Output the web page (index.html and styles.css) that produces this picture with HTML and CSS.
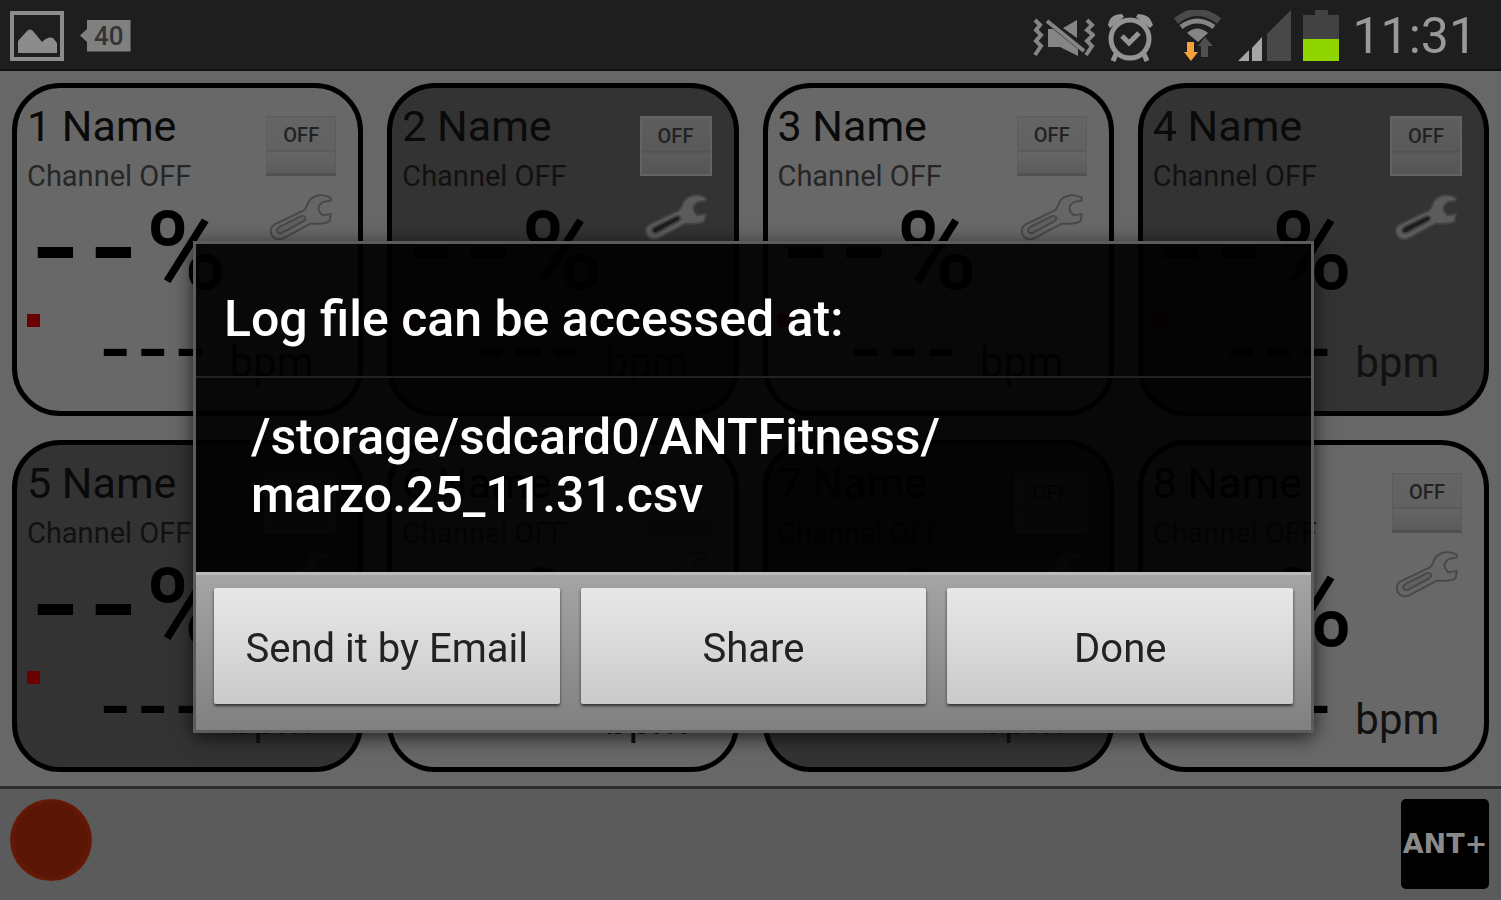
FILE: index.html
```html
<!DOCTYPE html>
<html lang="en">
<head>
  <meta charset="UTF-8" />
  <meta name="viewport" content="width=device-width, initial-scale=1.0"/>
  <title>ANT+ Fitness</title>
  <link rel="stylesheet" href="styles.css">
</head>
<body>

  <svg class="symbols" aria-hidden="true">
    <symbol id="wrench" viewBox="0 0 66 50">
      <path class="wrench-body" d="M5 32 L36 17 C39 15 39 12 41 8 C45 1 56 -1 64 4 L64 7 L57 8 C52 10 50 14 52 18 L55 22 L64 21 L63 28 C58 32 49 31 43 31 L15 46 C9 49 3 46 2 41 C1 37 2 34 5 32 Z"/>
      <path class="wrench-slot" d="M11 34 L33 23 C37 22 39 25 36 28 L14 40 C8 43 6 37 11 34 Z"/>
    </symbol>
  </svg>

  <header class="status-bar">
    <div class="status-left">
      <svg width="54" height="50" viewBox="0 0 54 50">
        <rect x="2" y="2" width="50" height="46" fill="none" stroke="#8c8c8c" stroke-width="4"/>
        <path d="M8 42 V30 L17 20 Q20 17 23 20 L32 31 Q38 25 43 27 L47 32 V42 Z" fill="#8c8c8c"/>
      </svg>
      <span class="tag">40</span>
    </div>
    <div class="status-right">
      <svg width="62" height="52" viewBox="0 0 62 52">
        <path d="M2 10 L7 15 L3 20 L8 25 L3 31 L8 36 L2 45 M54 10 L59 15 L54 20 L60 25 L54 31 L59 36 L53 45" fill="none" stroke="#858585" stroke-width="4"/>
        <path d="M15 19 H20 L45 39 V46 L27 37 H15 Z M30 18 L44 10 V28 Z" fill="#858585"/>
        <path d="M14 11 L51 41" stroke="#858585" stroke-width="4"/>
      </svg>
      <svg width="51" height="52" viewBox="0 0 51 52">
        <circle cx="23" cy="29" r="19" fill="none" stroke="#949494" stroke-width="5"/>
        <path d="M15 26 L22 33 L32 23" fill="none" stroke="#949494" stroke-width="5"/>
        <path d="M1 15 Q3 4 15 4 L17 7 L3 18 Z M46 15 Q43 4 31 4 L29 7 L43 18 Z" fill="#949494"/>
        <path d="M9 44 L6 51 M37 44 L40 51" stroke="#949494" stroke-width="5"/>
      </svg>
      <svg width="56" height="52" viewBox="0 0 56 52">
        <path d="M6 11 Q27 -6 49 11" fill="none" stroke="#4a4a4a" stroke-width="7"/>
        <path d="M11 17 Q27 5 44 17" fill="none" stroke="#858585" stroke-width="5"/>
        <path d="M17 23 Q27 14 38 23 L28 32 Z" fill="#858585"/>
        <path d="M35 27 L43 36 H38 V47 H31 V36 H28 Z" fill="#4f4f4f"/>
        <path d="M17 32 H24 V42 H28 L21 51 L14 42 H17 Z" fill="#f5a03a"/>
      </svg>
      <svg width="53" height="52" viewBox="0 0 53 52">
        <path d="M29 24 L53 0 V51 H29 Z" fill="#484848"/>
        <path d="M14 38 L24 27 V51 H14 Z M0 51 L11 40 V51 Z" fill="#a5a5a5"/>
      </svg>
      <svg width="37" height="52" viewBox="0 0 37 52">
        <path d="M0 5 H12 V0 H25 V5 H36 V29 H0 Z" fill="#424242"/>
        <path d="M0 29 H36 V51 H0 Z" fill="#90d500"/>
      </svg>
      <time class="clock">11:31</time>
    </div>
  </header>

  <main class="channels">
    <article class="card">
      <div class="card-top">
        <div class="info">
          <h2>1 Name</h2>
          <p class="channel">Channel OFF</p>
          <div class="percent"><span>-</span><span>-</span><b>%</b></div>
        </div>
        <div class="controls">
          <button class="toggle" type="button">OFF</button>
          <button class="settings" type="button" aria-label="Settings"><svg><use href="#wrench"/></svg></button>
        </div>
      </div>
      <div class="rate"><i class="dot"></i><span>-</span><span>-</span><span>-</span><b>bpm</b></div>
    </article>

    <article class="card dark">
      <div class="card-top">
        <div class="info">
          <h2>2 Name</h2>
          <p class="channel">Channel OFF</p>
          <div class="percent"><span>-</span><span>-</span><b>%</b></div>
        </div>
        <div class="controls">
          <button class="toggle" type="button">OFF</button>
          <button class="settings" type="button" aria-label="Settings"><svg><use href="#wrench"/></svg></button>
        </div>
      </div>
      <div class="rate"><i class="dot"></i><span>-</span><span>-</span><span>-</span><b>bpm</b></div>
    </article>

    <article class="card">
      <div class="card-top">
        <div class="info">
          <h2>3 Name</h2>
          <p class="channel">Channel OFF</p>
          <div class="percent"><span>-</span><span>-</span><b>%</b></div>
        </div>
        <div class="controls">
          <button class="toggle" type="button">OFF</button>
          <button class="settings" type="button" aria-label="Settings"><svg><use href="#wrench"/></svg></button>
        </div>
      </div>
      <div class="rate"><i class="dot"></i><span>-</span><span>-</span><span>-</span><b>bpm</b></div>
    </article>

    <article class="card dark">
      <div class="card-top">
        <div class="info">
          <h2>4 Name</h2>
          <p class="channel">Channel OFF</p>
          <div class="percent"><span>-</span><span>-</span><b>%</b></div>
        </div>
        <div class="controls">
          <button class="toggle" type="button">OFF</button>
          <button class="settings" type="button" aria-label="Settings"><svg><use href="#wrench"/></svg></button>
        </div>
      </div>
      <div class="rate"><i class="dot"></i><span>-</span><span>-</span><span>-</span><b>bpm</b></div>
    </article>

    <article class="card dark">
      <div class="card-top">
        <div class="info">
          <h2>5 Name</h2>
          <p class="channel">Channel OFF</p>
          <div class="percent"><span>-</span><span>-</span><b>%</b></div>
        </div>
        <div class="controls">
          <button class="toggle" type="button">OFF</button>
          <button class="settings" type="button" aria-label="Settings"><svg><use href="#wrench"/></svg></button>
        </div>
      </div>
      <div class="rate"><i class="dot"></i><span>-</span><span>-</span><span>-</span><b>bpm</b></div>
    </article>

    <article class="card">
      <div class="card-top">
        <div class="info">
          <h2>6 Name</h2>
          <p class="channel">Channel OFF</p>
          <div class="percent"><span>-</span><span>-</span><b>%</b></div>
        </div>
        <div class="controls">
          <button class="toggle" type="button">OFF</button>
          <button class="settings" type="button" aria-label="Settings"><svg><use href="#wrench"/></svg></button>
        </div>
      </div>
      <div class="rate"><i class="dot"></i><span>-</span><span>-</span><span>-</span><b>bpm</b></div>
    </article>

    <article class="card dark">
      <div class="card-top">
        <div class="info">
          <h2>7 Name</h2>
          <p class="channel">Channel OFF</p>
          <div class="percent"><span>-</span><span>-</span><b>%</b></div>
        </div>
        <div class="controls">
          <button class="toggle" type="button">OFF</button>
          <button class="settings" type="button" aria-label="Settings"><svg><use href="#wrench"/></svg></button>
        </div>
      </div>
      <div class="rate"><i class="dot"></i><span>-</span><span>-</span><span>-</span><b>bpm</b></div>
    </article>

    <article class="card">
      <div class="card-top">
        <div class="info">
          <h2>8 Name</h2>
          <p class="channel">Channel OFF</p>
          <div class="percent"><span>-</span><span>-</span><b>%</b></div>
        </div>
        <div class="controls">
          <button class="toggle" type="button">OFF</button>
          <button class="settings" type="button" aria-label="Settings"><svg><use href="#wrench"/></svg></button>
        </div>
      </div>
      <div class="rate"><i class="dot"></i><span>-</span><span>-</span><span>-</span><b>bpm</b></div>
    </article>
  </main>

  <footer class="toolbar">
    <button class="record" type="button" aria-label="Record"></button>
    <div class="ant-logo">ANT+</div>
  </footer>

  <div class="overlay">
    <section class="dialog" role="dialog" aria-labelledby="dialogTitle">
      <h1 id="dialogTitle">Log file can be accessed at:</h1>
      <p class="path">/storage/sdcard0/ANTFitness/<br>marzo.25_11.31.csv</p>
      <div class="actions">
        <button type="button">Send it by Email</button>
        <button type="button">Share</button>
        <button type="button">Done</button>
      </div>
    </section>
  </div>

</body>
</html>
```
FILE: styles.css
```css
* {
  box-sizing: border-box;
  margin: 0;
  padding: 0;
}

body {
  font-family: Roboto, sans-serif;
  background: #676767;
  color: #0a0a0a;
  min-height: 100vh;
  display: flex;
  flex-direction: column;
}

button {
  font-family: inherit;
  border: none;
  cursor: pointer;
}

.symbols {
  position: absolute;
  width: 0;
  height: 0;
}

/* status bar */

.status-bar {
  height: 71px;
  padding: 2px 24px 0 10px;
  background: #1e1e1e;
  border-bottom: 2px solid #111;
  display: flex;
  justify-content: space-between;
  align-items: center;
}

.status-left,
.status-right {
  display: flex;
  align-items: center;
  gap: 12px;
}

.status-left {
  gap: 16px;
}

.tag {
  background: #808080;
  color: #333;
  font-size: 26px;
  font-weight: 500;
  line-height: 32px;
  padding: 0 7px 0 14px;
  clip-path: polygon(0 50%, 7px 30%, 7px 0, 100% 0, 100% 100%, 7px 100%, 7px 70%);
}

.clock {
  color: #999;
  font-size: 50px;
  line-height: 68px;
}

/* channel cards */

.channels {
  flex: 1;
  display: grid;
  grid-template-columns: repeat(4, 1fr);
  grid-auto-rows: 1fr;
  gap: 24px;
  padding: 12px 12px 14px;
}

.card {
  background: #686868;
  border: 5px solid #000;
  border-radius: 48px;
  padding-left: 10px;
}

.card.dark {
  background: #333;
}

.card-top {
  display: flex;
  justify-content: space-between;
}

.info {
  padding-top: 10px;
}

.info h2 {
  font-size: 43px;
  font-weight: 400;
  line-height: 56px;
}

.channel {
  color: #262626;
  font-size: 29px;
  line-height: 44px;
}

.dark .channel {
  color: #111;
}

.percent {
  display: flex;
  padding: 14px 0 0 8px;
  height: 92px;
}

.percent span {
  color: #000;
  font-size: 148px;
  line-height: 70px;
  margin-right: 17px;
}

.percent b {
  color: #000;
  font-size: 110px;
  font-weight: 500;
  line-height: 80px;
  margin-left: -5px;
}

.controls {
  display: flex;
  flex-direction: column;
  align-items: center;
  gap: 18px;
  padding: 28px 22px 0 0;
}

.toggle {
  width: 70px;
  height: 60px;
  padding-bottom: 20px;
  color: #222;
  font-size: 20px;
  font-weight: 500;
  background: linear-gradient(#646464 0, #626262 58%, #585858 60%, #656565 64%, #5b5b5b 100%);
  border: 1px solid #5c5c5c;
  border-bottom: 3px solid #505050;
}

.dark .toggle {
  width: 72px;
  background: linear-gradient(#5e5e5e 0, #595959 58%, #515151 60%, #5c5c5c 64%, #555 100%);
  border: 2px solid #636363;
}

.settings {
  background: none;
  height: 48px;
}

.settings svg {
  display: block;
  width: 66px;
  height: 48px;
}

.wrench-body {
  fill: #666;
  stroke: #484848;
  stroke-width: 2px;
}

.wrench-slot {
  fill: var(--slot, #606060);
  stroke: #484848;
  stroke-width: 2px;
}

.dark .settings {
  --slot: #1a1a1a;
}

.dark .settings svg {
  opacity: 0.8;
}

.rate {
  display: flex;
  align-items: flex-start;
  padding-top: 24px;
}

.rate span {
  color: #000;
  font-size: 96px;
  line-height: 70px;
  height: 62px;
  margin-right: 11px;
}

.rate b {
  color: #111;
  font-size: 42px;
  font-weight: 400;
  line-height: 50px;
  padding-top: 24px;
  margin-left: 15px;
}

.dot {
  width: 13px;
  height: 13px;
  background: #6a0000;
  margin-right: 62px;
}

/* bottom toolbar */

.toolbar {
  background: #5b5b5b;
  border-top: 3px solid #2e2e2e;
  display: flex;
  justify-content: space-between;
  align-items: flex-start;
  padding: 10px 12px 11px 10px;
}

.record {
  width: 82px;
  height: 82px;
  border-radius: 50%;
  background: radial-gradient(#5a1505 60%, #6a1a08 72%);
}

.ant-logo {
  width: 88px;
  height: 90px;
  border-radius: 5px;
  background: #000;
  color: #8a8a8a;
  font-family: "DejaVu Sans", sans-serif;
  font-size: 27px;
  font-weight: 700;
  line-height: 90px;
  text-align: center;
}

/* dialog */

.overlay {
  position: fixed;
  inset: 74px 0 0;
  display: flex;
  justify-content: center;
  align-items: center;
  padding-left: 6px;
}

.dialog {
  width: 75%;
  background: rgba(0, 0, 0, 0.92);
  border: 3px solid #5c5c5c;
  box-shadow: 0 4px 18px rgba(0, 0, 0, 0.7);
  color: #fff;
}

.dialog h1 {
  font-size: 50px;
  font-weight: 500;
  line-height: 60px;
  padding: 45px 28px 27px;
  border-bottom: 2px solid #222;
}

.path {
  font-size: 50px;
  font-weight: 500;
  line-height: 58px;
  padding: 30px 55px 48px;
}

.actions {
  display: grid;
  grid-template-columns: repeat(3, 1fr);
  gap: 21px;
  padding: 13px 18px 26px;
  background: linear-gradient(#a4a4a4, #808080);
  border-top: 3px solid #bbb;
}

.actions button {
  height: 116px;
  padding-top: 4px;
  color: #222;
  font-size: 40px;
  background: linear-gradient(#e8e8e8, #cacaca);
  border-radius: 2px;
  box-shadow: 0 2px 3px #333;
}
```
